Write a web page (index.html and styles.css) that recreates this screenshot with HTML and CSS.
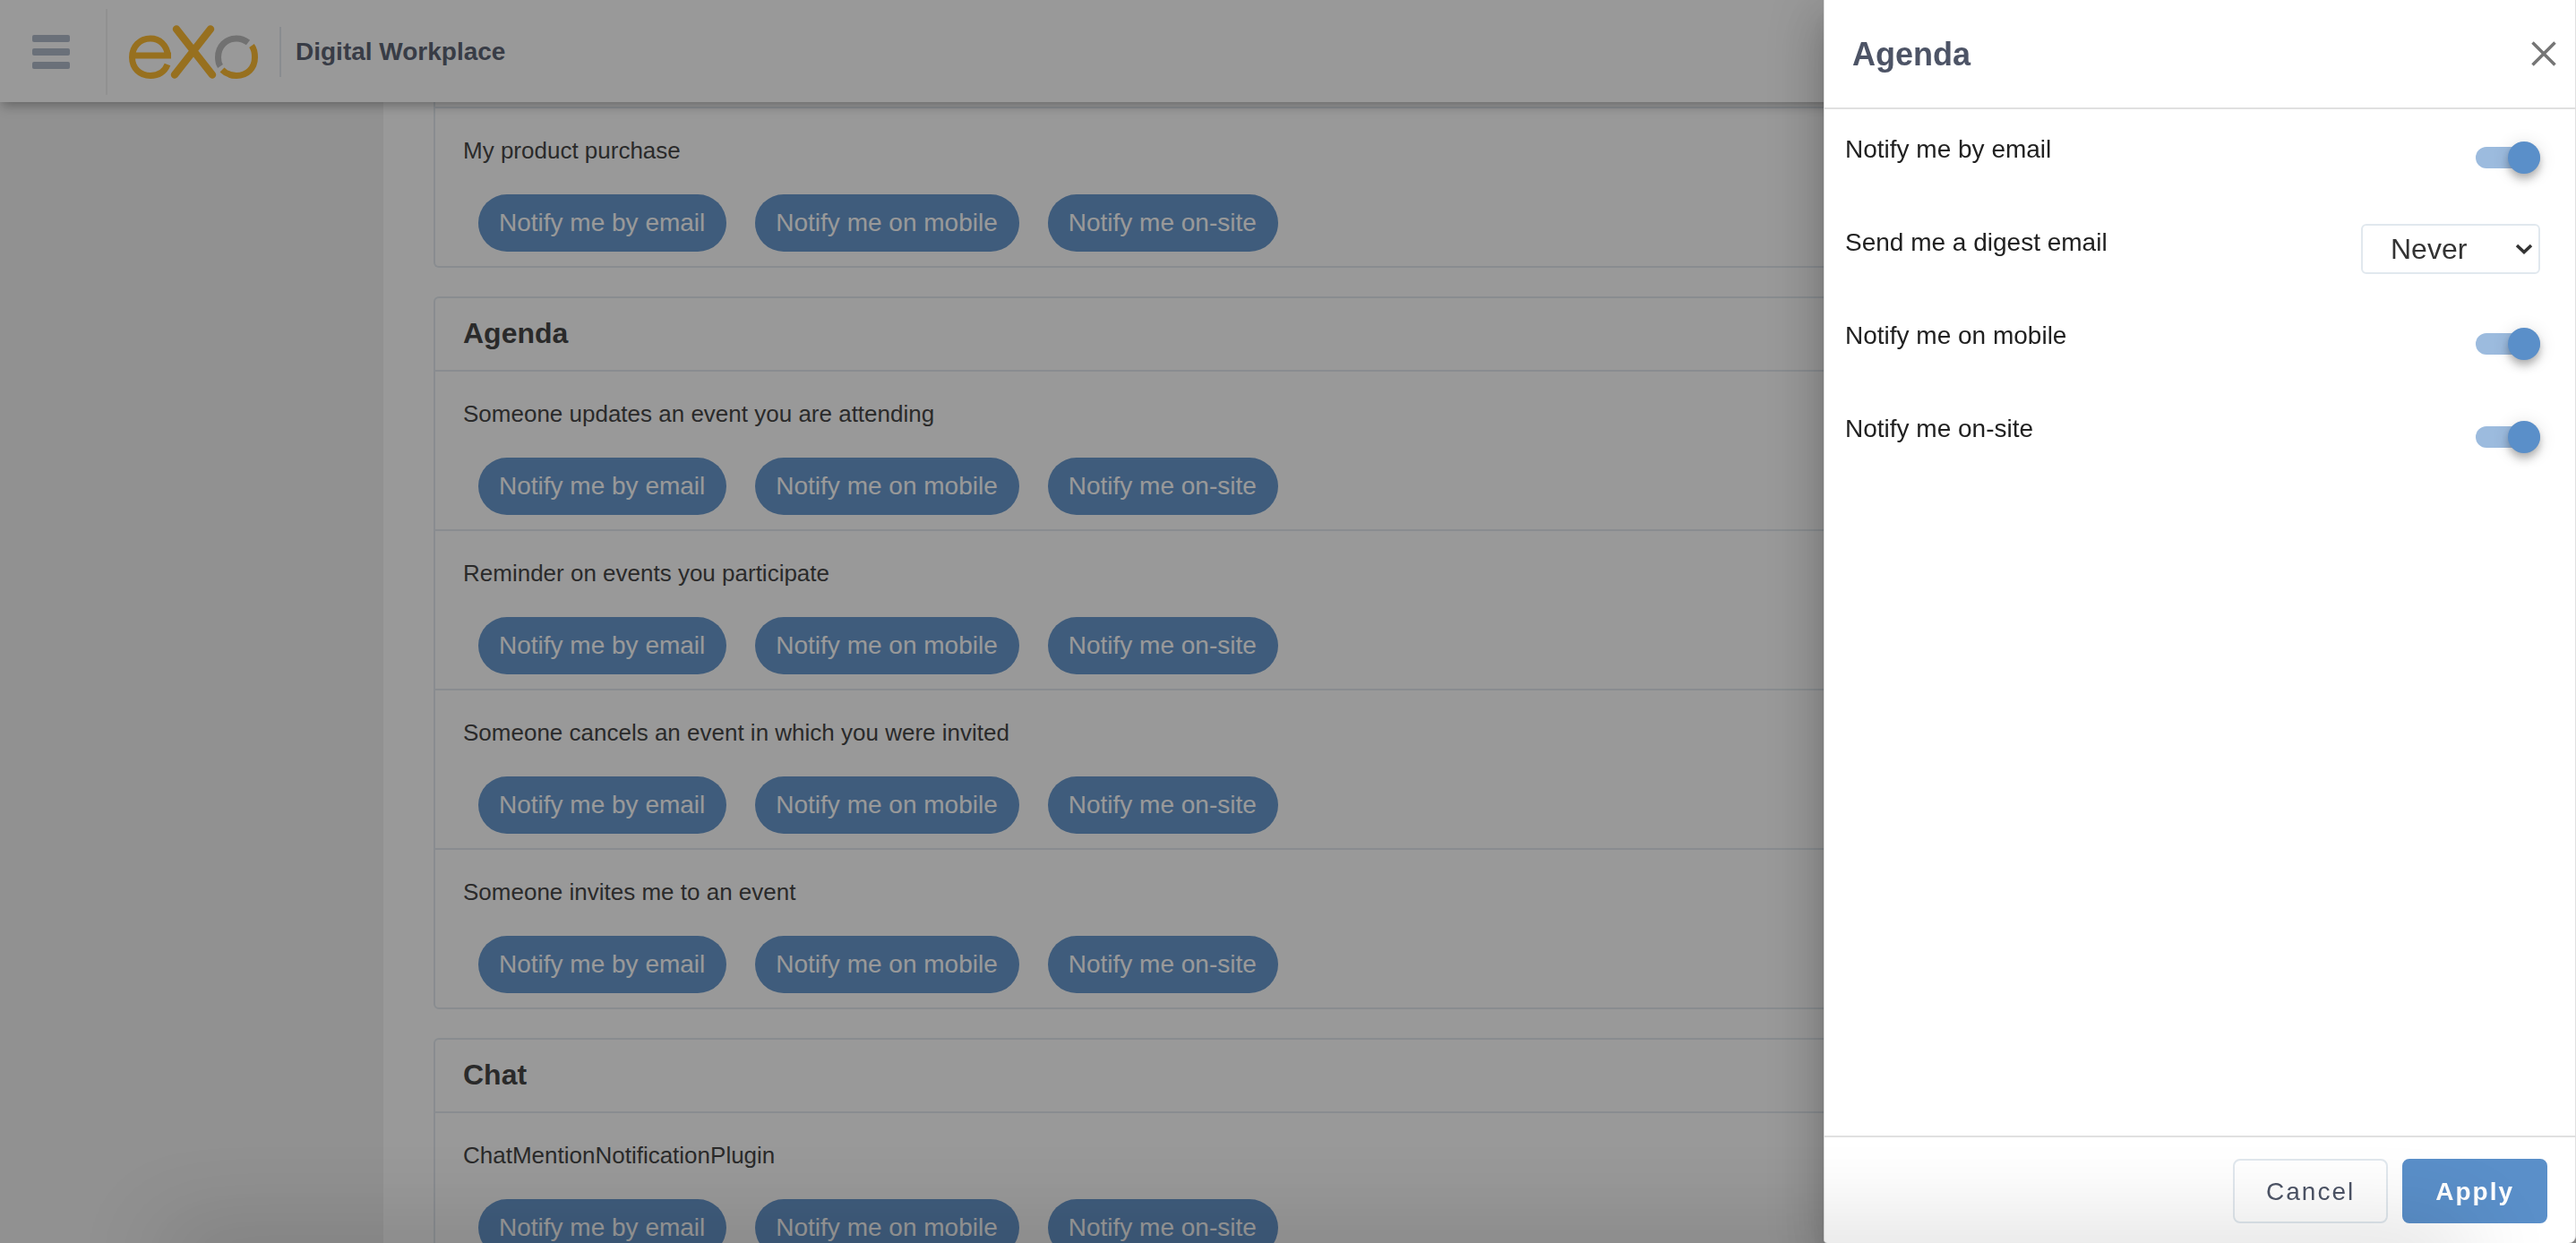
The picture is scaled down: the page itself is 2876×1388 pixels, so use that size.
FILE: index.html
```html
<!DOCTYPE html>
<html lang="en">
<head>
<meta charset="utf-8">
<title>Digital Workplace - Notification settings</title>
<link rel="stylesheet" href="styles.css">
</head>
<body>
<header class="topbar">
  <button class="menu-button" type="button" aria-label="Open menu">
    <span class="menu-bar"></span><span class="menu-bar"></span><span class="menu-bar"></span>
  </button>
  <a class="brand" href="#" aria-label="eXo">
    <svg class="logo" viewBox="0 0 144 60" fill="none" aria-hidden="true">
      <g stroke="#fcb41e" stroke-width="7">
        <path d="M4 34H47M43.500 34C42 22 34 15 24 15C12 15 3.500 24 3.500 36C3.500 48 12 56.500 24 56.500C33 56.500 40 52 43 44"/>
        <path d="M53 4.500L93 55.500M91 4.500L51 55.500" stroke-width="8.500" stroke-linecap="round"/>
        <path d="M137 23C140 27 140.500 31 140.500 36C140.500 48 132 56.500 120 56.500C113 56.500 108 54 104 50"/>
      </g>
      <path d="M133 19.500C129 16.500 125.500 15 120 15C108 15 99.500 24 99.500 36C99.500 40 100 43 102 46" stroke="#b5b5b5" stroke-width="7"/>
    </svg>
  </a>
  <h1 class="site-title">Digital Workplace</h1>
</header>

<div class="layout">
  <aside class="sidebar"></aside>
  <main class="content">
    <section class="card card-continued">
      <div class="row">
        <p class="row-title">My product purchase</p>
        <div class="chips"><span class="chip">Notify me by email</span><span class="chip">Notify me on mobile</span><span class="chip">Notify me on-site</span></div>
      </div>
    </section>
    <section class="card">
      <h2 class="card-title">Agenda</h2>
      <div class="row">
        <p class="row-title">Someone updates an event you are attending</p>
        <div class="chips"><span class="chip">Notify me by email</span><span class="chip">Notify me on mobile</span><span class="chip">Notify me on-site</span></div>
      </div>
      <div class="row">
        <p class="row-title">Reminder on events you participate</p>
        <div class="chips"><span class="chip">Notify me by email</span><span class="chip">Notify me on mobile</span><span class="chip">Notify me on-site</span></div>
      </div>
      <div class="row">
        <p class="row-title">Someone cancels an event in which you were invited</p>
        <div class="chips"><span class="chip">Notify me by email</span><span class="chip">Notify me on mobile</span><span class="chip">Notify me on-site</span></div>
      </div>
      <div class="row">
        <p class="row-title">Someone invites me to an event</p>
        <div class="chips"><span class="chip">Notify me by email</span><span class="chip">Notify me on mobile</span><span class="chip">Notify me on-site</span></div>
      </div>
    </section>
    <section class="card">
      <h2 class="card-title">Chat</h2>
      <div class="row">
        <p class="row-title">ChatMentionNotificationPlugin</p>
        <div class="chips"><span class="chip">Notify me by email</span><span class="chip">Notify me on mobile</span><span class="chip">Notify me on-site</span></div>
      </div>
    </section>
  </main>
</div>

<div class="overlay"></div>

<aside class="drawer" role="dialog" aria-labelledby="drawer-title">
  <header class="drawer-header">
    <h2 class="drawer-title" id="drawer-title">Agenda</h2>
    <button class="close-button" type="button" aria-label="Close">
      <svg class="close-icon" viewBox="0 0 28 28" aria-hidden="true"><path d="M1.500 1.500L26.500 26.500M26.500 1.500L1.500 26.500" stroke="#757575" stroke-width="3.500" fill="none"/></svg>
    </button>
  </header>
  <form class="settings" id="settings">
    <div class="setting">
      <label class="setting-label" for="by-email">Notify me by email</label>
      <input class="switch" id="by-email" type="checkbox" role="switch" checked>
    </div>
    <div class="setting">
      <label class="setting-label" for="digest">Send me a digest email</label>
      <span class="select-box">
        <select class="select" id="digest"><option selected>Never</option><option>Daily</option><option>Weekly</option></select>
        <svg class="select-arrow" viewBox="0 0 20 12" aria-hidden="true"><path d="M2 2L10 9.500L18 2" fill="none" stroke="#333" stroke-width="3.500"/></svg>
      </span>
    </div>
    <div class="setting">
      <label class="setting-label" for="on-mobile">Notify me on mobile</label>
      <input class="switch" id="on-mobile" type="checkbox" role="switch" checked>
    </div>
    <div class="setting">
      <label class="setting-label" for="on-site">Notify me on-site</label>
      <input class="switch" id="on-site" type="checkbox" role="switch" checked>
    </div>
  </form>
  <footer class="drawer-footer">
    <button class="button" type="button">Cancel</button>
    <button class="button button-primary" type="submit" form="settings">Apply</button>
  </footer>
</aside>
<div class="bottom-shade"></div>
</body>
</html>
```
FILE: styles.css
```css
* { box-sizing: border-box; }

html, body { height: 100%; }

body {
  margin: 0;
  overflow: hidden;
  background: #fff;
  color: #333;
  font-family: "Liberation Sans", Arial, Helvetica, sans-serif;
}

h1, h2, p { margin: 0; }

/* Top bar */
.topbar {
  position: relative;
  z-index: 1;
  display: flex;
  align-items: center;
  height: 114px;
  padding-top: 2px;
  background: #fff;
  box-shadow: 0 6px 12px -2px rgba(0, 0, 0, 0.34);
}

.menu-button {
  display: flex;
  flex-direction: column;
  justify-content: center;
  gap: 7px;
  width: 120px;
  height: 96px;
  padding: 0 40px 0 36px;
  border: 0;
  border-right: 2px solid #f0f0f0;
  background: none;
}

.menu-bar {
  height: 8px;
  border-radius: 2px;
  background: #a8b3c5;
}

.brand {
  display: flex;
  align-items: center;
  height: 56px;
  padding: 0 24px;
  border-right: 2px solid #e1e8ee;
}

.logo {
  width: 144px;
  height: 60px;
}

.site-title {
  margin-left: 16px;
  color: #4d5466;
  font-size: 28px;
  line-height: 40px;
}

/* Page body */
.layout {
  display: flex;
  height: calc(100% - 114px);
}

.sidebar {
  flex: 0 0 428px;
  background: #f0f0f0;
}

.content {
  flex: 1;
  display: flex;
  flex-direction: column;
  gap: 32px;
  padding: 0 56px;
  overflow: hidden;
}

.card {
  flex: none;
  border: 2px solid #e1e8ee;
  border-radius: 6px;
}

.card-continued {
  padding-top: 5px;
  border-top: 0;
  border-radius: 0 0 6px 6px;
}

.card-title {
  padding: 0 31px 2px;
  font-size: 32px;
  line-height: 78px;
}

.row {
  padding: 31px 31px 16px;
  border-top: 2px solid #e1e8ee;
}

.row-title {
  font-size: 26px;
  line-height: 32px;
}

.chips {
  display: flex;
  gap: 32px;
  padding: 33px 17px 0;
}

.chip {
  padding: 0 24px 0 23px;
  border-radius: 32px;
  background: #5a8fc9;
  color: #fff;
  font-size: 28px;
  line-height: 64px;
}

.overlay {
  position: fixed;
  inset: 0;
  z-index: 2;
  background: rgba(33, 33, 33, 0.46);
}

/* Drawer */
.drawer {
  position: fixed;
  inset: 0 0 0 auto;
  z-index: 3;
  display: flex;
  flex-direction: column;
  width: 840px;
  border: 1px solid #e0e0e0;
  border-width: 0 1px;
  border-radius: 0 0 8px 4px;
  background: #fff;
  box-shadow:
    0 16px 20px -10px rgba(0, 0, 0, 0.2),
    0 32px 48px 4px rgba(0, 0, 0, 0.14),
    0 12px 60px 10px rgba(0, 0, 0, 0.12);
}

.drawer-header {
  display: flex;
  align-items: center;
  justify-content: space-between;
  height: 122px;
  padding: 0 21px 0 31px;
  border-bottom: 2px solid #e0e0e0;
}

.drawer-title {
  padding-top: 2px;
  color: #4d5466;
  font-size: 36px;
  line-height: 48px;
}

.close-button {
  display: flex;
  padding: 0;
  border: 0;
  background: none;
}

.close-icon {
  width: 28px;
  height: 28px;
}

.settings {
  flex: 1;
  padding: 24px 39px 0 23px;
}

.setting {
  display: flex;
  justify-content: space-between;
  height: 104px;
}

.setting-label {
  color: #212121;
  font-size: 28px;
  line-height: 42px;
}

.switch {
  appearance: none;
  display: flex;
  align-items: center;
  justify-content: flex-end;
  width: 72px;
  height: 24px;
  margin: 18px 0 0;
  border-radius: 16px;
  background: #9cbbde;
}

.switch::before {
  content: "";
  width: 36px;
  height: 36px;
  border-radius: 50%;
  background: #5a8fc9;
  box-shadow:
    0 4px 8px -2px rgba(0, 0, 0, 0.2),
    0 8px 10px rgba(0, 0, 0, 0.14),
    0 2px 20px rgba(0, 0, 0, 0.12);
}

.select-box {
  position: relative;
  width: 200px;
  height: 56px;
}

.select {
  appearance: none;
  width: 100%;
  height: 100%;
  padding: 0 31px;
  border: 2px solid #e1e8ee;
  border-radius: 6px;
  background: #fff;
  color: #333;
  font: 32px "Liberation Sans", Arial, sans-serif;
}

.select-arrow {
  position: absolute;
  top: 22px;
  right: 8px;
  width: 20px;
  height: 12px;
  pointer-events: none;
}

.drawer-footer {
  display: flex;
  align-items: center;
  justify-content: flex-end;
  gap: 16px;
  height: 120px;
  padding: 2px 31px 0;
  border-top: 2px solid #e0e0e0;
}

.button {
  height: 72px;
  padding: 2px 35px 0;
  border: 2px solid #e1e8ee;
  border-radius: 8px;
  background: #fff;
  color: #4d5466;
  font: 28px "Liberation Sans", Arial, sans-serif;
  letter-spacing: 2px;
}

.button-primary {
  border-color: #5a8fc9;
  background: #5a8fc9;
  color: #fff;
  font-weight: bold;
}

/* Soft shade rising from the bottom edge of the window */
.bottom-shade {
  position: fixed;
  right: 140px;
  bottom: -20px;
  left: 200px;
  z-index: 4;
  height: 10px;
  box-shadow: 0 0 100px 20px rgba(0, 0, 0, 0.2);
  pointer-events: none;
}
```
